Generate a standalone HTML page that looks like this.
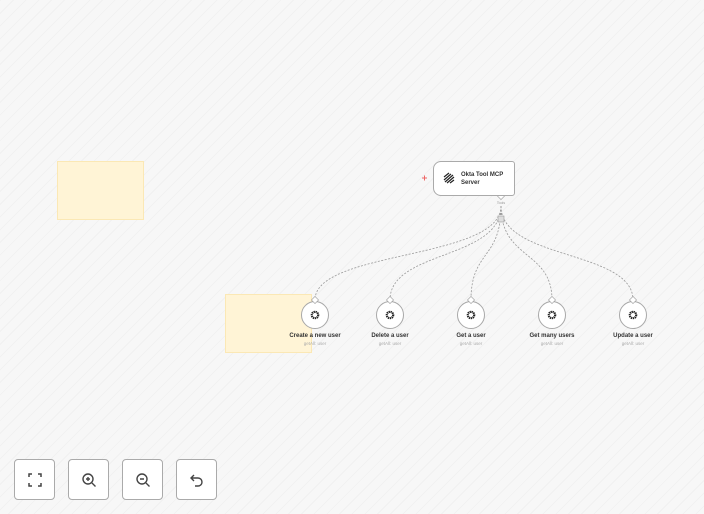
<!DOCTYPE html>
<html><head><meta charset="utf-8"><style>
body{margin:0;width:704px;height:514px;overflow:hidden;font-family:"Liberation Sans",sans-serif;
background:#f7f7f7 repeating-linear-gradient(135deg,#f1f1f1 0 1px,transparent 1px 9px);position:relative}
.sticky{position:absolute;background:#fff4d6;border:1px solid #fbe8b5;box-sizing:border-box}
.node{position:absolute;width:28px;height:28px;border-radius:50%;background:#fff;border:1px solid #a8a8a8;box-sizing:border-box}
.lbl{position:absolute;width:100px;text-align:center;font-size:6px;color:#333;font-weight:bold}
.sub{position:absolute;width:100px;text-align:center;font-size:4.5px;color:#aaa}
.btn{position:absolute;top:459px;width:41px;height:41px;border:1px solid #aaa;border-radius:4px;background:#fff;box-sizing:border-box;display:flex;align-items:center;justify-content:center}
</style></head><body>
<div class="sticky" style="left:57px;top:161px;width:87px;height:59px"></div>
<div class="sticky" style="left:225px;top:294px;width:87px;height:59px"></div>
<svg style="position:absolute;left:0;top:0" width="704" height="514">
<g fill="none" stroke="#999" stroke-width="0.8" stroke-dasharray="2 1.5">
<path d="M501 206 C501 260 315 250 315 300"/>
<path d="M501 206 C501 260 390 250 390 300"/>
<path d="M501 206 C501 260 471 250 471 300"/>
<path d="M501 206 C501 260 552 250 552 300"/>
<path d="M501 206 C501 260 633 250 633 300"/>
</g>
<g fill="#fff" stroke="#999" stroke-width="0.6">
<rect x="498.5" y="193.5" width="5" height="5" transform="rotate(45 501 196)"/>
<rect x="498" y="216" width="6" height="6" fill="#ddd"/>
</g>
<text x="501" y="204" font-size="3.5" fill="#999" text-anchor="middle" font-family="Liberation Sans">Tools</text>
<path d="M422 178h5M424.5 175.5v5" stroke="#e66" stroke-width="1"/>
</svg>
<div style="position:absolute;left:433px;top:161px;width:82px;height:35px;border:1px solid #aaa;border-radius:8px 3px 3px 8px;background:#fff;box-sizing:border-box"></div>
<svg style="position:absolute;left:442px;top:171px" width="14" height="14" viewBox="0 0 14 14" fill="none" stroke="#222" stroke-width="1.2"><path d="M2 6l5-4M2 9l7-6M3 11l8-7M5 12l7-6M8 12l4-3"/></svg>
<div style="position:absolute;left:461px;top:171px;font-size:6px;font-weight:bold;color:#333;line-height:8px">Okta Tool MCP<br>Server</div>
<div class="node" style="left:301px;top:301px"></div><div class="node" style="left:376px;top:301px"></div><div class="node" style="left:457px;top:301px"></div><div class="node" style="left:538px;top:301px"></div><div class="node" style="left:619px;top:301px"></div>
<svg style="position:absolute;left:0;top:0" width="704" height="514" fill="none" stroke="#222">
<g stroke-width="2.2" stroke-dasharray="1.3 0.6"><circle cx="315" cy="315" r="3.2"/><circle cx="390" cy="315" r="3.2"/><circle cx="471" cy="315" r="3.2"/><circle cx="552" cy="315" r="3.2"/><circle cx="633" cy="315" r="3.2"/></g>
<g fill="#fff" stroke="#999" stroke-width="0.6"><rect x="312.5" y="297.5" width="5" height="5" transform="rotate(45 315 300)"/><rect x="387.5" y="297.5" width="5" height="5" transform="rotate(45 390 300)"/><rect x="468.5" y="297.5" width="5" height="5" transform="rotate(45 471 300)"/><rect x="549.5" y="297.5" width="5" height="5" transform="rotate(45 552 300)"/><rect x="630.5" y="297.5" width="5" height="5" transform="rotate(45 633 300)"/></g>
</svg>
<div class="lbl" style="left:265px;top:333px">Create a new user</div><div class="sub" style="left:265px;top:341px">getAll: user</div>
<div class="lbl" style="left:340px;top:333px">Delete a user</div><div class="sub" style="left:340px;top:341px">getAll: user</div>
<div class="lbl" style="left:421px;top:333px">Get a user</div><div class="sub" style="left:421px;top:341px">getAll: user</div>
<div class="lbl" style="left:502px;top:333px">Get many users</div><div class="sub" style="left:502px;top:341px">getAll: user</div>
<div class="lbl" style="left:583px;top:333px">Update a user</div><div class="sub" style="left:583px;top:341px">getAll: user</div>
<div class="btn" style="left:14px"><svg width="16" height="16" viewBox="0 0 16 16" fill="none" stroke="#444" stroke-width="1.5"><path d="M2 5V2h3M11 2h3v3M14 11v3h-3M5 14H2v-3"/></svg></div>
<div class="btn" style="left:68px"><svg width="16" height="16" viewBox="0 0 16 16" fill="none" stroke="#444" stroke-width="1.4"><circle cx="7" cy="7" r="5"/><path d="M11 11l3.5 3.5M5 7h4M7 5v4"/></svg></div>
<div class="btn" style="left:122px"><svg width="16" height="16" viewBox="0 0 16 16" fill="none" stroke="#444" stroke-width="1.4"><circle cx="7" cy="7" r="5"/><path d="M11 11l3.5 3.5M5 7h4"/></svg></div>
<div class="btn" style="left:176px"><svg width="16" height="16" viewBox="0 0 16 16" fill="none" stroke="#444" stroke-width="1.4"><path d="M5 3L2 6l3 3M2 6h7a4 4 0 010 8H6"/></svg></div>
</body></html>
